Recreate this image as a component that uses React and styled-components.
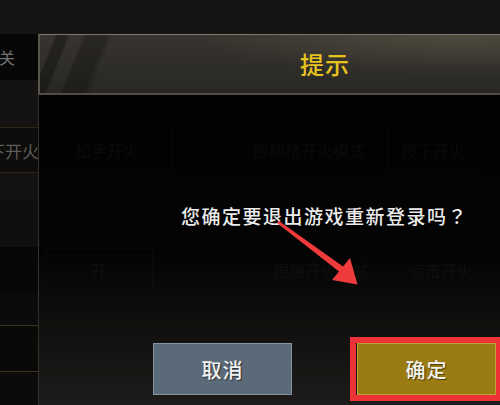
import React from 'react';
import styled, { createGlobalStyle, css } from 'styled-components';

const GlobalStyle = createGlobalStyle`
  html, body {
    margin: 0;
    padding: 0;
    background: #0b0b0b;
    overflow: hidden;
  }
  body {
    font-family: "Noto Sans CJK SC", "Noto Sans", sans-serif;
  }
`;

const Page = styled.div`
  position: relative;
  width: 500px;
  height: 405px;
  overflow: hidden;
  background: #0b0b0b;
`;

const Settings = styled.div`
  display: flex;
  flex-direction: column;
`;

const TopBar = styled.div`
  height: 34px;
  background: #171513;
`;

const Row = styled.div`
  display: flex;
  align-items: center;
  height: ${(p) => p.$h}px;
  background: ${(p) => p.$bg};
  box-sizing: border-box;
  ${(p) =>
    p.$gold &&
    css`
      border-top: 1px solid #3b331c;
      border-bottom: 1px solid #3b331c;
    `}
`;

const SideLabel = styled.span`
  width: 38px;
  height: 100%;
  display: flex;
  align-items: center;
  background: #070707;
  color: #727272;
  font-size: 16px;
  margin-left: -1px;
`;

const Option = styled.div`
  flex-shrink: 0;
  display: flex;
  align-items: center;
  justify-content: ${(p) => (p.$selected ? 'flex-end' : 'center')};
  box-sizing: border-box;
  width: ${(p) => p.$w}px;
  height: ${(p) => p.$hh || 46}px;
  margin-left: ${(p) => p.$ml || 0}px;
  font-size: ${(p) => (p.$selected ? 17 : 16)}px;
  white-space: nowrap;
  color: ${(p) => (p.$selected ? '#5c5c5a' : '#555')};
  background: ${(p) => (p.$selected ? '#0e0d0b' : 'transparent')};
  border: 1px solid ${(p) => (p.$selected ? 'transparent' : '#3c3c3c')};
  ${(p) =>
    p.$selected &&
    css`
      border-top-color: #2e2816;
      border-bottom-color: #2e2816;
    `}
`;

const Slider = styled.div`
  flex-shrink: 0;
  width: 66px;
  height: 1px;
  margin-left: 15px;
  background: #3c3c3c;
`;

const FaintText = styled.span`
  flex-shrink: 0;
  margin-left: ${(p) => p.$ml || 0}px;
  font-size: 16px;
  color: #555;
  white-space: nowrap;
`;

const Dialog = styled.div`
  position: absolute;
  left: 38px;
  top: 34px;
  bottom: 0;
  width: 572px;
  display: flex;
  flex-direction: column;
`;

const Header = styled.div`
  height: 61px;
  flex-shrink: 0;
  box-sizing: border-box;
  display: flex;
  align-items: center;
  justify-content: center;
  border-top: 1px solid #7d786a;
  border-bottom: 2px solid #4f4c45;
  border-left: 2px solid #5a564d;
  background:
    linear-gradient(112deg, transparent 0px, transparent 14px, rgba(0,0,0,0.32) 16px, rgba(0,0,0,0.32) 26px, transparent 28px, transparent 40px, rgba(0,0,0,0.26) 43px, rgba(0,0,0,0.26) 62px, transparent 68px),
    radial-gradient(ellipse 260px 40px at 420px 0px, rgba(170,160,120,0.2), transparent),
    linear-gradient(180deg, #383530 0%, #302e2a 50%, #292723 100%);
`;

const Title = styled.h1`
  margin: 0;
  font-size: 24px;
  font-weight: 500;
  letter-spacing: 1px;
  color: #e8c31c;
  line-height: 28px;
`;

const Body = styled.div`
  flex: 1;
  display: flex;
  flex-direction: column;
  align-items: center;
  border-left: 1px solid #33312d;
  background: linear-gradient(
    180deg,
    rgba(0, 0, 0, 0.9) 0%,
    rgba(3, 3, 3, 0.9) 50%,
    rgba(30, 29, 27, 0.93) 100%
  );
`;

const Message = styled.p`
  margin: 109px 0 0;
  font-size: 19px;
  font-weight: 500;
  line-height: 24px;
  letter-spacing: 1.5px;
  color: #ececec;
  text-shadow: 1px 1px 1px rgba(0, 0, 0, 0.7);
`;

const Punct = styled.span`
  font-family: "Noto Sans CJK TC", "Noto Sans CJK SC", sans-serif;
`;

const Buttons = styled.div`
  display: flex;
  gap: 65px;
  margin-top: 115px;
`;

const Button = styled.button`
  width: 139px;
  height: 52px;
  box-sizing: border-box;
  padding: 0;
  font-family: inherit;
  font-size: 20px;
  font-weight: 500;
  letter-spacing: 1px;
  color: #f2f2f0;
  text-shadow: 1px 1px 1px rgba(0, 0, 0, 0.55);
  background: ${(p) => (p.$primary ? '#9a7c12' : '#5a6a78')};
  border: 1px solid ${(p) => (p.$primary ? '#c1a13e' : '#8494a2')};
`;

const Highlight = styled.div`
  position: relative;
  &::after {
    content: '';
    position: absolute;
    top: -6px;
    left: -7px;
    right: -6px;
    bottom: -6px;
    border: 6px solid #ee3338;
    pointer-events: none;
  }
`;

const Overlay = styled.svg`
  position: absolute;
  left: 0;
  top: 0;
  pointer-events: none;
`;

export default function App() {
  return (
    <Page>
      <GlobalStyle />
      <Settings>
        <TopBar />
        <Row $h={46} $bg="#070707">
          <SideLabel>关</SideLabel>
        </Row>
        <Row $h={47} $bg="#141312" />
        <Row $h={46} $bg="#0b0b0b">
          <Option $w={130} $ml={-90} $selected>
            按下开火
          </Option>
          <Option $w={130} $ml={2}>
            松手开火
          </Option>
          <Slider />
          <FaintText>跟随枪开火模式</FaintText>
          <Option $w={90} $ml={23}>
            按下开火
          </Option>
        </Row>
        <Row $h={27} $bg="#141312" />
        <Row $h={47} $bg="#100f0e" />
        <Row $h={46} $bg="#060606">
          <Option $w={108} $ml={45} $hh={44}>
            开
          </Option>
          <FaintText $ml={120}>跟随开火模式</FaintText>
          <FaintText $ml={40}>点击开火</FaintText>
        </Row>
        <Row $h={32} $bg="#0b0b0b" />
        <Row $h={47} $bg="#0a0908" $gold />
      </Settings>

      <Dialog>
        <Header>
          <Title>提示</Title>
        </Header>
        <Body>
          <Message>
            您确定要退出游戏重新登录吗<Punct>？</Punct>
          </Message>
          <Buttons>
            <Button>取消</Button>
            <Highlight>
              <Button $primary>确定</Button>
            </Highlight>
          </Buttons>
        </Body>
      </Dialog>

      <Overlay width="500" height="405" viewBox="0 0 500 405">
        <polygon
          points="277,223 279,221 343,266.5 350,258 357.5,284.5 332,280 339,271.5"
          fill="#ef3b3b"
        />
      </Overlay>
    </Page>
  );
}
